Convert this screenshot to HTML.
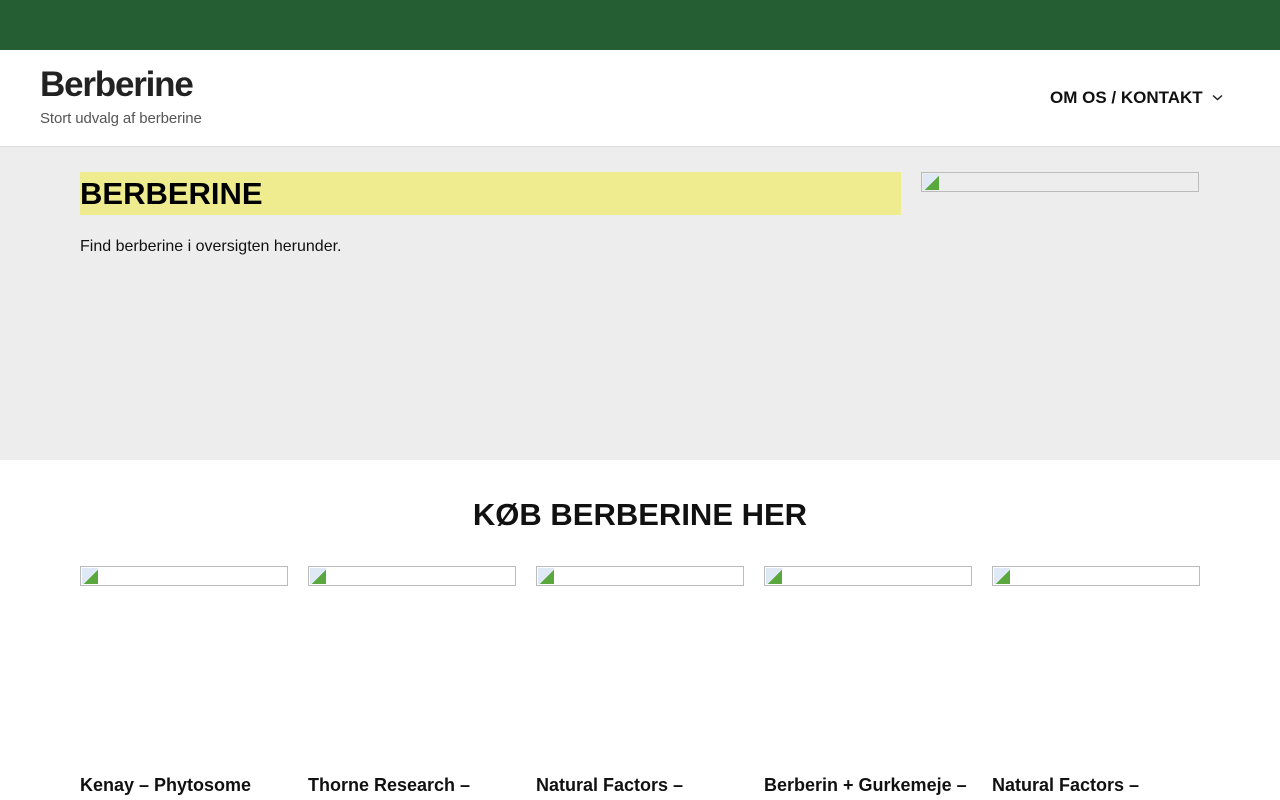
<!DOCTYPE html>
<html><head><meta charset="utf-8"><style>
*{margin:0;padding:0;box-sizing:border-box}
body{width:1280px;height:800px;overflow:hidden;background:#fff;font-family:"Liberation Sans",sans-serif;position:relative}
.top{height:50px;background:#265e33}
.hdr{position:absolute;top:50px;left:0;width:1280px;height:97px;border-bottom:1px solid #ddd;background:#fff}
.logo{position:absolute;left:40px;top:15px;font-size:35px;font-weight:bold;color:#222;letter-spacing:-1.2px}
.tag{position:absolute;left:40px;top:60px;font-size:15px;color:#555;letter-spacing:-0.1px}
.nav{position:absolute;left:1050px;top:38px;font-size:17px;font-weight:bold;color:#111}
.nav svg{position:absolute;left:162px;top:6px}
.hero{position:absolute;top:147px;left:0;width:1280px;height:313px;background:#ededed}
.h1{position:absolute;left:80px;top:25px;width:821px;height:43px;background:#eeec8f;font-size:31px;font-weight:bold;line-height:43px;color:#000}
.p{position:absolute;left:80px;top:91px;font-size:16px;color:#111}
.img{position:absolute;border:1px solid #bbb;height:20px}
.ic{position:absolute;left:1px;top:1px;width:16px;height:16px;background:linear-gradient(135deg,#dfe9f5 55%,#5aa73e 55%)}
h2{position:absolute;top:497px;width:1280px;text-align:center;font-size:31px;font-weight:bold;color:#111}
.t{position:absolute;top:775px;font-size:18px;font-weight:bold;color:#111;white-space:nowrap}
</style></head><body>
<div class="top"></div>
<div class="hdr"><div class="logo">Berberine</div><div class="tag">Stort udvalg af berberine</div>
<div class="nav">OM OS / KONTAKT<svg width="11" height="7" viewBox="0 0 11 7"><path d="M1 1.5l4.5 4 4.5-4" fill="none" stroke="#222" stroke-width="1.5"/></svg></div></div>
<div class="hero"><div class="h1">BERBERINE</div><div class="p">Find berberine i oversigten herunder.</div>
<div class="img" style="left:921px;top:25px;width:278px"><div class="ic"></div></div></div>
<h2>KØB BERBERINE HER</h2>
<div class="img" style="left:80px;top:566px;width:208px"><div class="ic"></div></div>
<div class="img" style="left:308px;top:566px;width:208px"><div class="ic"></div></div>
<div class="img" style="left:536px;top:566px;width:208px"><div class="ic"></div></div>
<div class="img" style="left:764px;top:566px;width:208px"><div class="ic"></div></div>
<div class="img" style="left:992px;top:566px;width:208px"><div class="ic"></div></div>
<div class="t" style="left:80px">Kenay – Phytosome</div>
<div class="t" style="left:308px">Thorne Research –</div>
<div class="t" style="left:536px">Natural Factors –</div>
<div class="t" style="left:764px">Berberin + Gurkemeje –</div>
<div class="t" style="left:992px">Natural Factors –</div>
</body></html>
